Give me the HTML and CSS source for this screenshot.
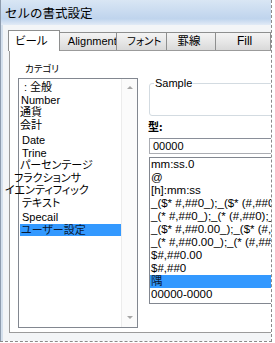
FILE: index.html
```html
<!DOCTYPE html>
<html lang="ja">
<head>
    <meta charset="UTF-8">
    <title>セルの書式設定</title>
    <link rel="stylesheet" href="styles.css">
</head>
<body>
    <div class="shot">
        <div class="window">
            <div class="titlebar">セルの書式設定</div>
            <div class="client">
                <div class="tabs">
                    <div class="tab active kana">ビール</div>
                    <div class="tab t-align">Alignment</div>
                    <div class="tab t-font kana">フォント</div>
                    <div class="tab t-border">罫線</div>
                    <div class="tab t-fill">Fill</div>
                </div>
                <div class="panel">
                    <div class="left">
                        <div class="label kana">カテゴリ</div>
                        <div class="listbox">
                            <ul class="items kana">
                                <li class="in4">: 全般</li>
                                <li class="in1">Number</li>
                                <li>通貨</li>
                                <li>会計</li>
                                <li class="in2 gap3">Date</li>
                                <li class="in2">Trine</li>
                                <li>パーセンテージ</li>
                                <li class="out6">フラクションサ</li>
                                <li class="out15">イエンティフィック</li>
                                <li class="in2">テキスト</li>
                                <li class="in2 gap2">Specail</li>
                                <li class="sel in1">ユーザー設定</li>
                            </ul>
                            <div class="scroll">
                                <span class="arrow up"></span>
                                <span class="arrow down"></span>
                            </div>
                        </div>
                    </div>
                    <div class="right">
                        <fieldset class="sample">
                            <legend>Sample</legend>
                        </fieldset>
                        <div class="type-label">型:</div>
                        <div class="input">00000</div>
                        <ul class="formats">
                            <li>mm:ss.0</li>
                            <li>@</li>
                            <li>[h]:mm:ss</li>
                            <li>_($* #,##0_);_($* (#,##0);_($* "-"_);_(@_)</li>
                            <li>_(* #,##0_);_(* (#,##0);_(* "-"_);_(@_)</li>
                            <li>_($* #,##0.00_);_($* (#,##0.00);_($* "-"??_);_(@_)</li>
                            <li>_(* #,##0.00_);_(* (#,##0.00);_(* "-"??_);_(@_)</li>
                            <li>$#,##0.00</li>
                            <li>$#,##0</li>
                            <li class="sel">隅</li>
                            <li>00000-0000</li>
                        </ul>
                    </div>
                </div>
            </div>
        </div>
    </div>
</body>
</html>
```

FILE: styles.css
```css
body {
    margin: 0;
    font-family: "Liberation Sans", "Noto Sans CJK JP", sans-serif;
    font-size: 11px;
    color: #000;
    background: #fff;
}

.kana {
    font-feature-settings: "palt";
}

.shot {
    width: 271px;
    height: 341px;
    border-right: 1px dashed #8a8a8a;
    border-bottom: 1px dashed #8a8a8a;
    overflow: hidden;
}

.window {
    height: 100%;
    border-left: 1px solid #8e9cae;
    display: flex;
    flex-direction: column;
}

/* title bar */
.titlebar {
    height: 25px;
    line-height: 25px;
    padding-left: 4px;
    font-family: "Noto Sans CJK JP", sans-serif;
    font-size: 12.5px;
    background: linear-gradient(#d9e6f4, #bfd4ed 75%, #e2ebf6);
}

.client {
    flex: 1;
    border-left: 2px solid #d4e0ed;
    background: #f3f5f7;
    padding: 5px 0 0 6px;
}

/* tabs */
.tabs {
    display: flex;
    align-items: flex-end;
    height: 20px;
    position: relative;
    z-index: 1;
}

.tab {
    box-sizing: border-box;
    height: 18px;
    line-height: 16px;
    margin-left: -1px;
    border: 1px solid #8e8f8f;
    border-bottom: none;
    background: linear-gradient(#f4f4f4, #e7e7e7 50%, #d9d9d9);
    white-space: nowrap;
    overflow: hidden;
}

.tab.active {
    width: 57px;
    height: 21px;
    line-height: 20px;
    margin-bottom: -1px;
    padding-left: 6px;
    background: #fff;
    font-size: 11.5px;
}

.t-align {
    width: 64px;
    padding-left: 8px;
}

.t-font {
    width: 56px;
    padding-left: 10px;
    font-size: 10.5px;
}

.t-border {
    width: 54px;
    padding-left: 10px;
    font-size: 11.5px;
}

.t-fill {
    width: 60px;
    padding-left: 21px;
    font-size: 12px;
}

/* tab page */
.panel {
    box-sizing: border-box;
    width: 300px;
    height: 283px;
    border: 1px solid #9b9b9b;
    background: #fff;
    display: flex;
    gap: 11px;
    padding-left: 8px;
}

.left {
    width: 120px;
    flex-shrink: 0;
}

.label {
    margin: 11px 0 0 7px;
    line-height: 12px;
    font-size: 9.5px;
    font-family: "Noto Sans CJK JP", sans-serif;
}

.listbox {
    box-sizing: border-box;
    height: 250px;
    margin-top: 4px;
    border: 1px solid #828790;
    display: flex;
}

.items {
    flex: 1;
    list-style: none;
    margin: 0;
    padding: 2px 0 0 1px;
}

.items li {
    height: 12.5px;
    line-height: 12.5px;
    white-space: nowrap;
}

.items .sel,
.formats .sel {
    background: #3399ff;
    color: #0a1a33;
}

.in1 { padding-left: 1px; }
.in2 { padding-left: 2px; }
.in4 { padding-left: 4px; }
.out6 { text-indent: -6px; }
.out15 { text-indent: -15px; }
.gap2 { margin-top: 2px; }
.gap3 { margin-top: 3px; }

.scroll {
    width: 15px;
    background: #fbfbfb;
    border-left: 1px solid #ececec;
    display: flex;
    flex-direction: column;
    justify-content: space-between;
    align-items: center;
    padding: 7px 0 8px;
}

.arrow {
    width: 0;
    height: 0;
    border-left: 3px solid transparent;
    border-right: 3px solid transparent;
}

.arrow.up {
    border-bottom: 3px solid #a6a6a6;
}

.arrow.down {
    border-top: 3px solid #a6a6a6;
}

.right {
    flex: 1;
    min-width: 0;
}

.sample {
    box-sizing: border-box;
    height: 39px;
    margin: 26px 0 0;
    padding: 0;
    border: 1px solid #d3dbe1;
    border-radius: 3px;
}

.sample legend {
    margin-left: 4px;
    padding: 0 1px;
    line-height: 12px;
}

.type-label {
    margin: 3px 0 0 -1px;
    line-height: 14px;
    font-family: "Noto Sans CJK JP", sans-serif;
    font-weight: bold;
    font-size: 11px;
}

.input {
    box-sizing: border-box;
    height: 16px;
    margin-top: 5px;
    padding-left: 3px;
    line-height: 14px;
    border: 1px solid #abadb3;
    border-top-color: #8a8f99;
}

.formats {
    box-sizing: border-box;
    height: 147px;
    margin: 3px 0 0;
    padding: 0;
    list-style: none;
    border: 1px solid #828790;
}

.formats li {
    height: 13px;
    line-height: 13px;
    padding-left: 1px;
    white-space: nowrap;
    font-size: 11.5px;
}
```
